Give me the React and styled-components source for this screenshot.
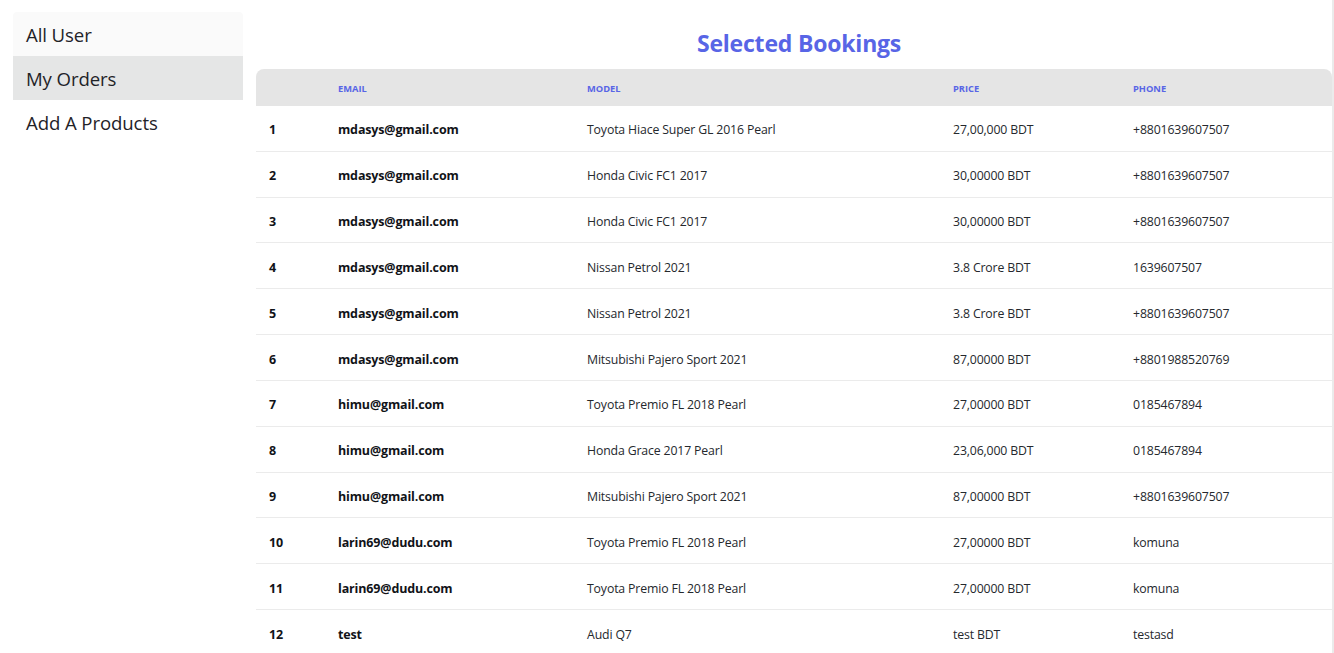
import React from "react";
import styled, { createGlobalStyle } from "styled-components";

const Global = createGlobalStyle`
  html, body { margin: 0; padding: 0; background: #ffffff; }
  body { font-family: "Open Sans", "Noto Sans", sans-serif; color: #1f2328; overflow: hidden; }
  * { box-sizing: border-box; }
`;

const Page = styled.div`
  display: flex;
  width: 1334px;
  height: 653px;
  overflow: hidden;
  border-right: 2px solid #ebebeb;
`;

const Sidebar = styled.nav`
  flex: 0 0 256px;
  padding: 12px 13px 0 13px;
`;

const Menu = styled.ul`
  list-style: none;
  margin: 0;
  padding: 0;
  width: 230px;
`;

const MenuItem = styled.li`
  height: 44px;
  display: flex;
  align-items: center;
  padding-left: 13px;
  padding-top: 1px;
  font-size: 18.6px;
  color: #1f2328;
  background: ${(p) => (p.$active ? "#e5e6e6" : p.$tint ? "#fafafa" : "transparent")};
  border-radius: ${(p) => (p.$tint ? "4px 4px 0 0" : "0")};
  letter-spacing: -0.1px;
`;

const Main = styled.main`
  flex: 1;
  display: flex;
  flex-direction: column;
  min-width: 0;
`;

const Title = styled.h1`
  flex-shrink: 0;
  margin: 0;
  padding: 28px 0 0 10px;
  height: 69px;
  text-align: center;
  font-size: 23px;
  line-height: 30px;
  font-weight: 700;
  color: #5865e6;
  letter-spacing: -0.2px;
`;

const Table = styled.div`
  flex-shrink: 0;
  width: 1076px;
`;

const cols = "69px 249px 366px 180px 1fr";

const HeadRow = styled.div`
  display: grid;
  grid-template-columns: ${cols};
  align-items: center;
  height: 37px;
  background: #e5e5e5;
  border-radius: 8px 8px 0 0;
`;

const HeadCell = styled.div`
  padding-left: 13px;
  padding-top: 2px;
  font-size: 9.3px;
  font-weight: 700;
  text-transform: uppercase;
  color: #5865e6;
  letter-spacing: 0;
`;

const Row = styled.div`
  display: grid;
  grid-template-columns: ${cols};
  align-items: center;
  height: 45.83px;
  border-bottom: 1px solid #ebebeb;
`;

const Cell = styled.div`
  padding-left: 13px;
  padding-top: 3px;
  font-size: ${(p) => (p.$bold ? "12.5px" : "12.3px")};
  font-weight: ${(p) => (p.$bold ? 700 : 400)};
  color: ${(p) => (p.$bold ? "#111318" : "#25282d")};
  white-space: nowrap;
  letter-spacing: -0.15px;
`;

const rows = [
  ["mdasys@gmail.com", "Toyota Hiace Super GL 2016 Pearl", "27,00,000 BDT", "+8801639607507"],
  ["mdasys@gmail.com", "Honda Civic FC1 2017", "30,00000 BDT", "+8801639607507"],
  ["mdasys@gmail.com", "Honda Civic FC1 2017", "30,00000 BDT", "+8801639607507"],
  ["mdasys@gmail.com", "Nissan Petrol 2021", "3.8 Crore BDT", "1639607507"],
  ["mdasys@gmail.com", "Nissan Petrol 2021", "3.8 Crore BDT", "+8801639607507"],
  ["mdasys@gmail.com", "Mitsubishi Pajero Sport 2021", "87,00000 BDT", "+8801988520769"],
  ["himu@gmail.com", "Toyota Premio FL 2018 Pearl", "27,00000 BDT", "0185467894"],
  ["himu@gmail.com", "Honda Grace 2017 Pearl", "23,06,000 BDT", "0185467894"],
  ["himu@gmail.com", "Mitsubishi Pajero Sport 2021", "87,00000 BDT", "+8801639607507"],
  ["larin69@dudu.com", "Toyota Premio FL 2018 Pearl", "27,00000 BDT", "komuna"],
  ["larin69@dudu.com", "Toyota Premio FL 2018 Pearl", "27,00000 BDT", "komuna"],
  ["test", "Audi Q7", "test BDT", "testasd"],
];

export default function App() {
  return (
    <>
      <Global />
      <Page>
        <Sidebar>
          <Menu>
            <MenuItem $tint>All User</MenuItem>
            <MenuItem $active>My Orders</MenuItem>
            <MenuItem>Add A Products</MenuItem>
          </Menu>
        </Sidebar>
        <Main>
          <Title>Selected Bookings</Title>
          <Table>
            <HeadRow>
              <HeadCell></HeadCell>
              <HeadCell>Email</HeadCell>
              <HeadCell>Model</HeadCell>
              <HeadCell>Price</HeadCell>
              <HeadCell>Phone</HeadCell>
            </HeadRow>
            {rows.map((r, i) => (
              <Row key={i}>
                <Cell $bold>{i + 1}</Cell>
                <Cell $bold>{r[0]}</Cell>
                <Cell>{r[1]}</Cell>
                <Cell>{r[2]}</Cell>
                <Cell>{r[3]}</Cell>
              </Row>
            ))}
          </Table>
        </Main>
      </Page>
    </>
  );
}
